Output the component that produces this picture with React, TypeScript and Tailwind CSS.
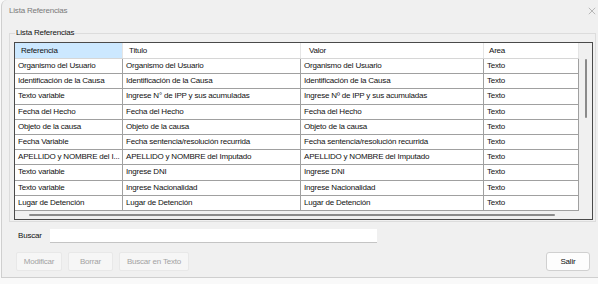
const rows: [string, string, string, string][] = [
  ["Organismo del Usuario", "Organismo del Usuario", "Organismo del Usuario", "Texto"],
  ["Identificación de la Causa", "Identificación de la Causa", "Identificación de la Causa", "Texto"],
  ["Texto variable", "Ingrese N° de IPP y sus acumuladas", "Ingrese Nº de IPP y sus acumuladas", "Texto"],
  ["Fecha del Hecho", "Fecha del Hecho", "Fecha del Hecho", "Texto"],
  ["Objeto de la causa", "Objeto de la causa", "Objeto de la causa", "Texto"],
  ["Fecha Variable", "Fecha sentencia/resolución recurrida", "Fecha sentencia/resolución recurrida", "Texto"],
  ["APELLIDO y NOMBRE del I...", "APELLIDO y NOMBRE del Imputado", "APELLIDO y NOMBRE del Imputado", "Texto"],
  ["Texto variable", "Ingrese DNI", "Ingrese DNI", "Texto"],
  ["Texto variable", "Ingrese Nacionalidad", "Ingrese Nacionalidad", "Texto"],
  ["Lugar de Detención", "Lugar de Detención", "Lugar de Detención", "Texto"],
];

const cols = ["w-[108px]", "w-[178px]", "w-[183px]", "w-[95px]"];
const headerPad = ["pl-[6px]", "pl-[6px]", "pl-[8px]", "pl-[5px]"];
const headers = ["Referencia", "Titulo", "Valor", "Area"];

const DisabledButton = ({ label, width }: { label: string; width: string }) => (
  <button
    className={`${width} h-[19px] whitespace-nowrap rounded-[2px] border border-[#e8e8e8] bg-[#f6f6f6] text-[8px] tracking-[-0.2px] text-[#a3a3a3]`}
    disabled
    type="button"
  >
    {label}
  </button>
);

export default function App() {
  return (
    <div
      className="h-[284px] w-[598px] bg-[#f9f9f9] text-[8px] tracking-[-0.2px] text-[#111]"
      style={{ fontFamily: '"Liberation Sans", Arial, sans-serif' }}
    >
      <div className="ml-[1px] flex h-[278px] flex-col rounded-tl-[6px] border-b border-l border-[#cfcfcf] bg-[#f0f0f0]">
        <div className="flex h-[22px] items-center justify-between pl-[7px] pr-[2px]">
          <span className="text-[8px] text-[#7a7a7a]">Lista Referencias</span>
          <svg className="h-[8px] w-[8px]" viewBox="0 0 10 10">
            <path d="M1 1L9 9M9 1L1 9" stroke="#a0a0a0" strokeWidth="0.9" />
          </svg>
        </div>

        <div className="relative ml-[7px] mr-[2px] mt-[11px] border border-[#dcdcdc] pb-[1px] pl-[4px] pr-[2px] pt-[8px]">
          <span className="absolute -top-[6px] left-[5px] bg-[#f0f0f0] px-[1px] leading-[10px]">
            Lista Referencias
          </span>

          <div className="flex h-[178px] flex-col border border-[#4a4a4a] bg-[#f0f0f0]">
            <div className="flex flex-1 overflow-hidden">
              <div className="flex flex-col">
                <div className="flex h-[16px] border-b border-[#d6d6d6] bg-white">
                  {headers.map((h, i) => (
                    <div
                      className={`${cols[i]} ${headerPad[i]} flex items-center border-r border-[#e5e5e5] ${
                        i === 0 ? "bg-[#cce8ff]" : ""
                      }`}
                      key={h}
                    >
                      {h}
                    </div>
                  ))}
                </div>
                {rows.map((r, ri) => (
                  <div className="flex h-[15.2px] border-b border-[#a0a0a0] bg-white" key={ri}>
                    {r.map((c, ci) => (
                      <div
                        className={`${cols[ci]} flex items-center overflow-hidden whitespace-nowrap border-r border-[#a0a0a0] px-[3px]`}
                        key={ci}
                      >
                        {c}
                      </div>
                    ))}
                  </div>
                ))}
              </div>
              <div className="flex w-[13px] justify-center bg-[#f0f0f0] pt-[16px]">
                <div className="h-[59px] w-[2px] rounded-full bg-[#8a8a8a]" />
              </div>
            </div>
            <div className="flex h-[8px] items-center pl-[14px]">
              <div className="h-[2px] w-[526px] rounded-full bg-[#8a8a8a]" />
            </div>
          </div>
        </div>

        <div className="mt-[7px] flex items-center pl-[16px]">
          <span className="w-[32px]">Buscar</span>
          <div className="h-[14px] w-[327px] border-b border-[#c4c4c4] bg-white" />
        </div>

        <div className="mt-[9px] flex items-center gap-[6px] pl-[14px]">
          <DisabledButton label="Modificar" width="w-[46px]" />
          <DisabledButton label="Borrar" width="w-[45px]" />
          <DisabledButton label="Buscar en Texto" width="w-[70px]" />
          <button
            className="ml-auto mr-[8px] h-[19px] w-[44px] rounded-[3px] border border-[#d0d0d0] bg-[#fdfdfd] text-[8px]"
            type="button"
          >
            Salir
          </button>
        </div>
      </div>
    </div>
  );
}
